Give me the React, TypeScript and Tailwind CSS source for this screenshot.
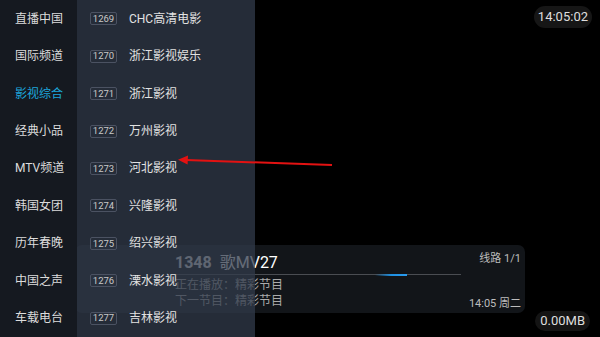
const groups = [
  "直播中国",
  "国际频道",
  "影视综合",
  "经典小品",
  "MTV频道",
  "韩国女团",
  "历年春晚",
  "中国之声",
  "车载电台",
];

const channels = [
  { no: 1269, name: "CHC高清电影" },
  { no: 1270, name: "浙江影视娱乐" },
  { no: 1271, name: "浙江影视" },
  { no: 1272, name: "万州影视" },
  { no: 1273, name: "河北影视" },
  { no: 1274, name: "兴隆影视" },
  { no: 1275, name: "绍兴影视" },
  { no: 1276, name: "溧水影视" },
  { no: 1277, name: "吉林影视" },
];

const font = { fontFamily: 'Roboto, "Noto Sans CJK SC", sans-serif' };

export default function App() {
  return (
    <div
      className="relative w-[600px] h-[337px] overflow-hidden bg-black"
      style={font}
    >
      {/* now playing panel, sits under the drawer */}
      <div className="absolute left-[75px] top-[245px] w-[450px] h-[68px] rounded-[7px] bg-[#121519] flex pl-[100px] pr-[4px] pt-[7px] pb-[3px]">
        <div className="w-[286px] flex flex-col">
          <div className="flex items-center gap-[8px] h-[21px] leading-[21px]">
            <span className="text-[16px] font-bold text-[#e6e6e6]">1348</span>
            <span className="text-[16px] text-white">歌MV27</span>
          </div>
          <div className="relative h-px mt-[1px] bg-[#4a4d52]">
            <div className="absolute left-[200px] top-[-0.5px] w-[32px] h-[2px] bg-gradient-to-r from-transparent via-[#1e8fe0] to-[#2a9cf0]" />
          </div>
          <div className="mt-[2px] text-[12px] leading-[16px] text-[#ababab]">
            正在播放：精彩节目
          </div>
          <div className="text-[12px] leading-[16px] text-[#ababab]">
            下一节目：精彩节目
          </div>
        </div>
        <div className="flex-1 flex flex-col items-end justify-between text-[11px] leading-[13px] text-[#bdbdbd]">
          <span>线路 1/1</span>
          <span>14:05 周二</span>
        </div>
      </div>

      {/* drawer */}
      <div className="relative z-10 flex h-full">
        <div className="w-[77px] h-full bg-[#151920] flex flex-col">
          {groups.map((g, i) => (
            <div
              key={g}
              className={`h-[37.5px] flex items-center pl-[15px] text-[12px] ${
                i === 2 ? "text-[#1ca6dc]" : "text-[#dcdcdc]"
              }`}
            >
              {g}
            </div>
          ))}
        </div>
        <div className="w-[178px] h-full bg-[rgba(50,59,75,0.75)] flex flex-col">
          {channels.map((c) => (
            <div
              key={c.no}
              className="h-[37.5px] flex items-center pl-[13px]"
            >
              <span className="w-[27px] h-[13px] border border-[#4b5262] rounded-[2px] flex items-center justify-center text-[9.5px] leading-none text-[#c9c9c9]">
                {c.no}
              </span>
              <span className="ml-[12px] text-[12px] text-[#e2e2e2]">
                {c.name}
              </span>
            </div>
          ))}
        </div>
      </div>

      {/* clock */}
      <div className="absolute right-[8px] top-[6px] h-[22px] px-[4px] rounded-full bg-[#161616] flex items-center text-[13px] text-[#dedede]">
        14:05:02
      </div>

      {/* speed */}
      <div className="absolute right-[10px] bottom-[6px] h-[20px] px-[5px] rounded-full bg-[#141414] flex items-center text-[13px] text-[#dedede]">
        0.00MB
      </div>

      {/* red annotation arrow */}
      <svg
        className="absolute left-0 top-0 z-20"
        width="600"
        height="337"
        viewBox="0 0 600 337"
      >
        <line
          x1="332"
          y1="165"
          x2="186"
          y2="160"
          stroke="#e31212"
          strokeWidth="2"
        />
        <polygon points="178,159.8 188,155.6 187.6,164.4" fill="#e31212" />
      </svg>
    </div>
  );
}
